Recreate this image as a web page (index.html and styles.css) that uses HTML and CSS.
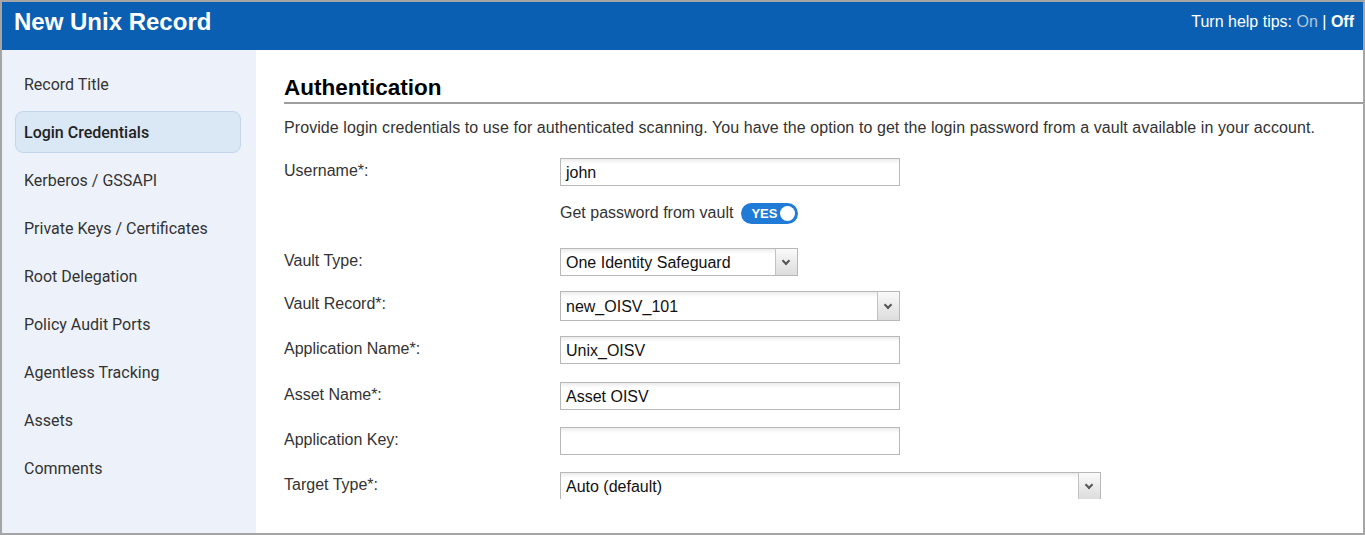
FILE: index.html
```html
<!DOCTYPE html>
<html lang="en">
<head>
    <meta charset="UTF-8">
    <title>New Unix Record</title>
    <link rel="stylesheet" href="styles.css">
</head>
<body>
    <div class="frame">
        <!-- Barra superior -->
        <div class="topbar">
            <h1>New Unix Record</h1>
            <div class="help-tips">Turn help tips: <span class="tip-on">On</span> | <b>Off</b></div>
        </div>

        <div class="body">
            <!-- Menu lateral -->
            <ul class="sidebar">
                <li>Record Title</li>
                <li class="active">Login Credentials</li>
                <li>Kerberos / GSSAPI</li>
                <li>Private Keys / Certificates</li>
                <li>Root Delegation</li>
                <li>Policy Audit Ports</li>
                <li>Agentless Tracking</li>
                <li>Assets</li>
                <li>Comments</li>
            </ul>

            <!-- Formulario -->
            <div class="main">
                <h2>Authentication</h2>
                <p class="intro">Provide login credentials to use for authenticated scanning. You have the option to get the login password from a vault available in your account.</p>

                <div class="form">
                    <div class="row">
                        <label>Username*:</label>
                        <div class="field"><div class="input w-340">john</div></div>
                    </div>
                    <div class="row row-toggle">
                        <label></label>
                        <div class="field vault">Get password from vault
                            <span class="toggle">YES<span class="knob"></span></span>
                        </div>
                    </div>
                    <div class="row short">
                        <label>Vault Type:</label>
                        <div class="field"><div class="select w-238">One Identity Safeguard<span class="arrow"></span></div></div>
                    </div>
                    <div class="row">
                        <label>Vault Record*:</label>
                        <div class="field"><div class="select w-340 tall">new_OISV_101<span class="arrow"></span></div></div>
                    </div>
                    <div class="row tall-row">
                        <label>Application Name*:</label>
                        <div class="field"><div class="input w-340">Unix_OISV</div></div>
                    </div>
                    <div class="row">
                        <label>Asset Name*:</label>
                        <div class="field"><div class="input w-340">Asset OISV</div></div>
                    </div>
                    <div class="row">
                        <label>Application Key:</label>
                        <div class="field"><div class="input w-340"></div></div>
                    </div>
                    <div class="row">
                        <label>Target Type*:</label>
                        <div class="field"><div class="select w-541">Auto (default)<span class="arrow"></span></div></div>
                    </div>
                </div>
            </div>
        </div>
    </div>
</body>
</html>
```

FILE: styles.css
```css
body {
    margin: 0;
    font-family: "Liberation Sans", Arial, sans-serif;
    color: #333;
}

.frame {
    width: 1365px;
    height: 535px;
    box-sizing: border-box;
    border: 2px solid #a5a5a5;
    display: flex;
    flex-direction: column;
    overflow: hidden;
}

.topbar {
    height: 48px;
    flex-shrink: 0;
    background-color: #0b5fb3;
    display: flex;
    align-items: center;
    justify-content: space-between;
    padding: 0 8px 0 12px;
}

.topbar h1 {
    margin: 0;
    font-size: 24px;
    color: white;
    margin-top: -8px;
}

.help-tips {
    color: white;
    font-size: 16px;
    margin-top: -8px;
    margin-right: 1px;
}

.tip-on {
    color: #b4c6de;
}

.body {
    flex: 1;
    display: flex;
    min-height: 0;
}

.sidebar {
    width: 254px;
    flex-shrink: 0;
    margin: 0;
    padding: 13px 15px 0 13px;
    box-sizing: border-box;
    list-style: none;
    background-color: #edf2fa;
    font-family: Roboto, sans-serif;
    font-size: 16px;
    color: #333;
}

.sidebar li {
    height: 42px;
    line-height: 42px;
    padding-left: 8px;
    margin-bottom: 6px;
    border: 1px solid transparent;
    border-radius: 8px;
    box-sizing: border-box;
}

.sidebar li.active {
    background-color: #dae7f5;
    border-color: #c3d5ea;
    font-weight: 500;
    color: #222;
}

.main {
    flex: 1;
    padding: 25px 0 0 28px;
    overflow: hidden;
}

.main h2 {
    margin: 0;
    font-size: 22.5px;
    color: #000;
    padding-bottom: 1px;
    border-bottom: 2px solid #9e9e9e;
    line-height: 26px;
}

.intro {
    margin: 14px 0 0 0;
    font-size: 16px;
    line-height: 20px;
    letter-spacing: 0.08px;
}

.form {
    margin-top: 20px;
    height: 341px;
    overflow: hidden;
}

.row {
    display: flex;
    align-items: flex-start;
    height: 45px;
}

.row.short {
    height: 43px;
}

.row.tall-row {
    height: 46px;
}

.row label {
    width: 276px;
    flex-shrink: 0;
    font-size: 16px;
    line-height: 20px;
    padding-top: 3px;
}

.row-toggle {
    height: 45px;
}

.field {
    font-size: 16px;
}

.input,
.select {
    height: 28px;
    box-sizing: border-box;
    border: 1px solid #b8b8b8;
    background: linear-gradient(#ececec, #fff 5px);
    padding: 1px 0 0 5px;
    line-height: 26px;
    color: #111;
    position: relative;
}

.select.tall {
    height: 30px;
    line-height: 28px;
}

.w-238 { width: 238px; }
.w-340 { width: 340px; }
.w-541 { width: 541px; }

.arrow {
    position: absolute;
    top: 0;
    right: 0;
    bottom: 0;
    width: 21px;
    border-left: 1px solid #c2c2c2;
    background: linear-gradient(#fafafa, #dcdcdc);
}

.arrow::after {
    content: "";
    position: absolute;
    left: 7px;
    top: 50%;
    width: 4px;
    height: 4px;
    margin-top: -4px;
    border-right: 2px solid #555;
    border-bottom: 2px solid #555;
    transform: rotate(45deg);
}

.vault {
    display: flex;
    align-items: center;
    height: 24px;
    margin-top: -2px;
    color: #333;
}

.toggle {
    margin-left: 8px;
    width: 57px;
    height: 21px;
    box-sizing: border-box;
    border-radius: 11px;
    background-color: #1f7bd6;
    color: white;
    font-weight: bold;
    font-size: 13px;
    line-height: 21px;
    padding-left: 10px;
    position: relative;
}

.knob {
    position: absolute;
    right: 3px;
    top: 3px;
    width: 15px;
    height: 15px;
    border-radius: 50%;
    background: white;
}
```
